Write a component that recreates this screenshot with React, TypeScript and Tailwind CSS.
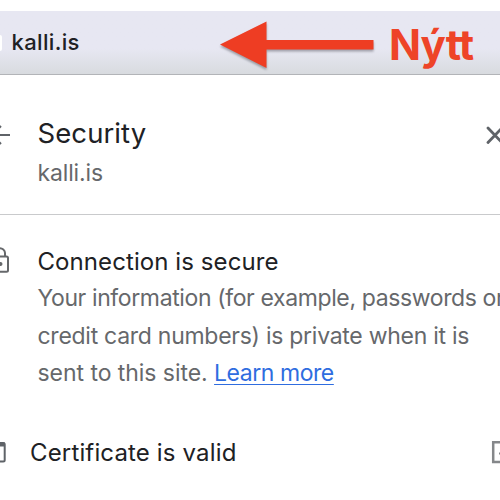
import React from "react";

export default function App() {
  return (
    <main className="flex h-[500px] w-[500px] flex-col overflow-hidden bg-white pt-[11px] font-['Inter','Liberation_Sans',sans-serif] whitespace-nowrap text-[#202124]">
      <div className="flex h-16 shrink-0 items-start border-b border-[#b2b4b8] bg-linear-to-b from-[#e7e7f2] from-60% to-[#d8dbdf]">
        <div className="mt-6 h-4 w-[2px] shrink-0 rounded-r-full bg-white" />
        <span className="mt-[15px] ml-[9.5px] w-[208.5px] text-[22px] leading-8 font-medium tracking-[0.35px]">kalli.is</span>
        <svg className="mt-[7px] h-[54px] w-[156px] shrink-0 drop-shadow-[0_2px_1px_rgba(70,70,80,0.45)]" viewBox="220 18 156 54" fill="#ee3d23">
          <path d="M220 44.5 266.5 21.5V40H373.5V49.5H266.5V68Z" />
        </svg>
        <span className="mt-[6px] ml-[13px] text-[42px] leading-[56px] font-bold tracking-[-0.9px] text-[#ee4428]">Nýtt</span>
      </div>

      <header className="flex h-[140px] shrink-0 items-start border-b border-[#c9cacc]">
        <svg className="mt-12 h-6 w-3 shrink-0" viewBox="0 123 12 24" fill="none" stroke="#5f6368" strokeWidth="2">
          <path d="M1 126-8 135 1 144M-8 135H10" />
        </svg>
        <div className="ml-[25.5px] flex w-[446.5px] flex-col">
          <h1 className="mt-10 text-[27.5px] leading-9 tracking-[0.08px]">Security</h1>
          <p className="mt-[6px] text-[23px] leading-8 tracking-[-0.15px] text-[#66686b]">kalli.is</p>
        </div>
        <svg className="mt-12 h-6 w-4 shrink-0" viewBox="484 123 16 24" fill="none" stroke="#5f6368" strokeWidth="2.8" strokeLinecap="round">
          <path d="M488 128 502 142.5M502 128 488 142.5" />
        </svg>
      </header>

      <section className="flex h-[213px] shrink-0 items-start">
        <svg className="mt-[30px] h-8 w-[37.5px] shrink-0" viewBox="0 245 37.5 32" fill="none" stroke="#66686b" strokeWidth="2">
          <rect x="-11" y="256.5" width="19" height="15.3" rx="1.5" />
          <path d="M-6.5 256V253A5.75 4.8 0 0 1 5 253V256" />
          <circle cx="0.5" cy="264" r="2" fill="#66686b" stroke="none" />
        </svg>
        <div className="flex flex-col">
          <h2 className="mt-[29px] text-[24px] leading-9 tracking-[0.08px]">Connection is secure</h2>
          <p className="text-[23px] leading-[37.5px] text-[#66686b]">
            <span className="block tracking-[-0.38px]">Your information (for example, passwords or</span>
            <span className="block tracking-[-0.27px]">credit card numbers) is private when it is</span>
            <span className="block tracking-[-0.05px]">sent to this site. <a className="tracking-[-0.45px] text-[#2f6de0] underline decoration-1 underline-offset-3">Learn more</a></span>
          </p>
        </div>
      </section>

      <section className="flex h-[72px] items-start">
        <svg className="mt-[10px] h-8 w-[30px] shrink-0" viewBox="0 438 30 32" fill="none" stroke="#5f6368" strokeWidth="2">
          <rect x="-15" y="443" width="19.7" height="18.5" rx="1.5" />
          <path d="M-15 444.5H5" strokeWidth="4" />
        </svg>
        <span className="mt-[7px] w-[461px] text-[24px] leading-9 tracking-[0.15px]">Certificate is valid</span>
        <svg className="mt-[10px] h-8 w-[9px] shrink-0" viewBox="491 438 9 32" fill="none" stroke="#85878a" strokeWidth="2.5">
          <path d="M500 442.2H493.2V462H500" />
          <path d="M499 453.5H501" strokeWidth="2" />
        </svg>
      </section>
    </main>
  );
}
